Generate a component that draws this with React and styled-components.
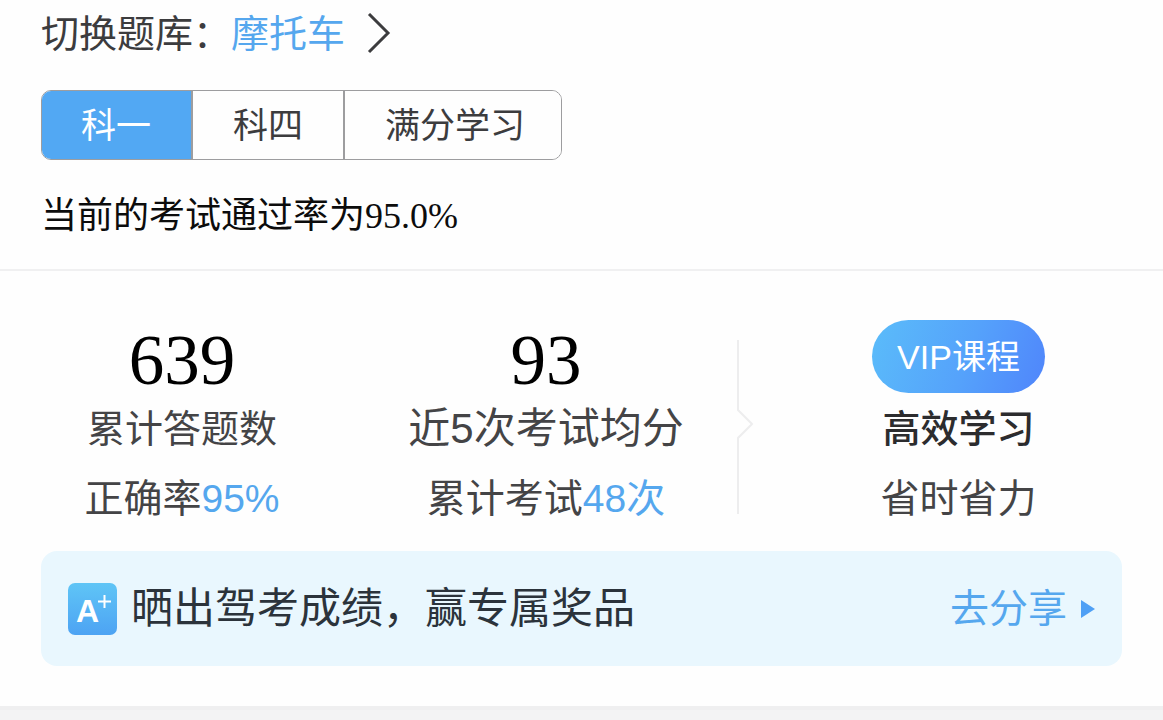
import React, { useState } from 'react';
import styled, { createGlobalStyle } from 'styled-components';

const GlobalStyle = createGlobalStyle`
  * {
    box-sizing: border-box;
  }
  body {
    margin: 0;
    background: #fefefe;
    font-family: "Liberation Sans", "Noto Sans CJK SC", sans-serif;
    color: #3c3c3e;
  }
  button {
    font-family: inherit;
    cursor: pointer;
  }
`;

const Page = styled.main`
  display: flex;
  flex-direction: column;
  min-height: 100vh;
`;

const Header = styled.header`
  display: flex;
  flex-direction: column;
  align-items: flex-start;
  gap: 32px;
  padding: 10px 41px 29px;
  border-bottom: 2px solid #f0f0f1;
`;

const BankRow = styled.div`
  display: flex;
  align-items: center;
  font-size: 38px;
  line-height: 48px;
`;

const BankButton = styled.button`
  display: flex;
  align-items: center;
  gap: 22px;
  padding: 0;
  border: 0;
  background: none;
  color: #55a7ee;
  font-size: 38px;
  line-height: 48px;
`;

const Tabs = styled.div`
  display: flex;
  height: 70px;
  border: 1px solid #9d9d9f;
  border-radius: 10px;
  overflow: hidden;
`;

const Tab = styled.button`
  padding: 2px 40px 0;
  border: 0;
  background: ${(props) => (props.$active ? '#52a8f3' : '#fefefe')};
  color: ${(props) => (props.$active ? '#fff' : '#3c3c3e')};
  font-size: 35px;
  line-height: 48px;

  & + & {
    border-left: 2px solid #9d9d9f;
  }
  &:first-child {
    padding-left: 39px;
  }
  &:last-child {
    padding-right: 36px;
  }
`;

const PassRate = styled.p`
  margin: 0;
  color: #0c0c0c;
  font-family: "Liberation Serif", "Noto Sans CJK SC", serif;
  font-size: 36px;
  line-height: 48px;
`;

const Stats = styled.section`
  display: grid;
  grid-template-columns: 364fr 364fr 26px 409fr;
  padding: 49px 0 23px;
`;

const Column = styled.div`
  display: flex;
  flex-direction: column;
  align-items: center;
  white-space: nowrap;
`;

const Figure = styled.strong`
  color: #000;
  font-family: "Liberation Serif", serif;
  font-size: 71px;
  font-weight: 400;
  line-height: 80px;
`;

const Label = styled.span`
  margin-bottom: 12px;
  color: ${(props) => (props.$strong ? '#2c2c2e' : '#444446')};
  font-size: ${(props) => (props.$large ? '42px' : '38px')};
  font-weight: ${(props) => (props.$strong ? 500 : 400)};
  line-height: 58px;
`;

const Detail = styled.span`
  color: #444446;
  font-size: 39px;
  line-height: 58px;
`;

const Blue = styled.span`
  color: #55a7ee;
`;

const Divider = styled.svg`
  align-self: end;
  justify-self: end;
  margin-bottom: 14px;
`;

const VipButton = styled.button`
  height: 73px;
  margin-bottom: 7px;
  padding: 0 25px;
  border: 0;
  border-radius: 37px;
  background: linear-gradient(110deg, #5abafa 5%, #55a2fb 55%, #5088fb 95%);
  color: #fff;
  font-size: 34px;
  line-height: 48px;
`;

const Banner = styled.section`
  display: flex;
  align-items: center;
  height: 115px;
  margin: 0 41px 40px;
  padding: 0 27px;
  border-radius: 16px;
  background: #e9f7fe;
`;

const BannerText = styled.p`
  flex: 1;
  margin: 0 0 0 14px;
  color: #2b333b;
  font-size: 42px;
  line-height: 56px;
`;

const ShareLink = styled.a`
  display: flex;
  align-items: center;
  gap: 14px;
  color: #55a7ee;
  font-size: 39px;
  line-height: 56px;
  text-decoration: none;
`;

const GradeBadge = styled.span`
  position: relative;
  width: 49px;
  height: 52px;
  border-radius: 7px;
  background: linear-gradient(#5fc5f6, #4da3f3);
  color: #fff;
`;

const GradeLetter = styled.b`
  position: absolute;
  left: 8px;
  top: 10px;
  font-size: 32px;
  line-height: 36px;
`;

const GradePlus = styled.svg`
  position: absolute;
  right: 6px;
  top: 12px;
`;

const Footer = styled.div`
  flex: 1;
  min-height: 14px;
  border-top: 4px solid #efeff0;
  background: #f3f3f4;
`;

const subjects = ['科一', '科四', '满分学习'];

const App = () => {
  const [active, setActive] = useState('科一');

  return (
    <Page>
      <GlobalStyle />
      <Header>
        <BankRow>
          <span>切换题库：</span>
          <BankButton>
            摩托车
            <svg width="24" height="42" viewBox="0 0 24 42" fill="none" stroke="#3c3c3e" strokeWidth="3">
              <path d="M2 1L21 20L2 39" />
            </svg>
          </BankButton>
        </BankRow>
        <Tabs>
          {subjects.map((name) => (
            <Tab key={name} $active={name === active} onClick={() => setActive(name)}>
              {name}
            </Tab>
          ))}
        </Tabs>
        <PassRate>当前的考试通过率为95.0%</PassRate>
      </Header>

      <Stats>
        <Column>
          <Figure>639</Figure>
          <Label>累计答题数</Label>
          <Detail>正确率<Blue>95%</Blue></Detail>
        </Column>
        <Column>
          <Figure>93</Figure>
          <Label $large>近5次考试均分</Label>
          <Detail>累计考试<Blue>48次</Blue></Detail>
        </Column>
        <Divider width="17" height="174" viewBox="0 0 17 174" fill="none" stroke="#ededee" strokeWidth="2">
          <path d="M1 0V70L15 84L1 98V174" />
        </Divider>
        <Column>
          <VipButton>VIP课程</VipButton>
          <Label $strong>高效学习</Label>
          <Detail>省时省力</Detail>
        </Column>
      </Stats>

      <Banner>
        <GradeBadge>
          <GradeLetter>A</GradeLetter>
          <GradePlus width="13" height="13" viewBox="0 0 13 13" stroke="#fff" strokeWidth="2">
            <path d="M6.5 0V13M0 6.5H13" />
          </GradePlus>
        </GradeBadge>
        <BannerText>晒出驾考成绩，赢专属奖品</BannerText>
        <ShareLink href="#share">
          去分享
          <svg width="14" height="20" viewBox="0 0 14 20" fill="#4fa0f5">
            <path d="M0 1L14 10L0 19Z" />
          </svg>
        </ShareLink>
      </Banner>
      <Footer />
    </Page>
  );
};

export default App;
